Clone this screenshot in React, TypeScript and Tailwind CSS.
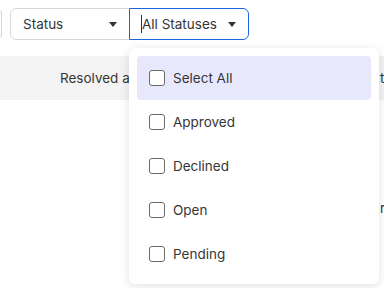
import React from "react";

const options = ["Select All", "Approved", "Declined", "Open", "Pending"];

const Caret = () => (
  <svg width="8" height="5" viewBox="0 0 8 5" className="shrink-0">
    <path d="M0 0 L8 0 L4 5 Z" fill="#333333" />
  </svg>
);

const App = () => {
  return (
    <div
      className="relative h-[288px] w-[384px] overflow-hidden bg-white text-[13.5px] text-[#363636]"
      style={{ fontFamily: "Inter, 'Liberation Sans', sans-serif" }}
    >
      <div className="flex items-center gap-2 pt-2">
        <div className="-ml-6 h-8 w-[26px] rounded-md border border-[#d9d9d9]" />
        <div className="flex h-8 w-[120px] items-center justify-between rounded-l-md border border-[#d9d9d9] pl-3 pr-[12px]">
          <span>Status</span>
          <Caret />
        </div>
        <div className="-ml-[9px] flex h-8 w-[120px] items-center justify-between rounded-r-md border border-[#1a66e0] pl-[11px] pr-[12px]">
          <span className="flex items-center">
            <span className="h-[18px] w-px bg-[#333333]" />
            All Statuses
          </span>
          <Caret />
        </div>
      </div>

      <div className="mt-4 flex h-[44px] items-center bg-[#f3f3f3]">
        <span className="ml-[60px]">Resolved at</span>
        <span className="ml-auto -mr-2 w-[12px]">t</span>
      </div>
      <div className="mt-[98px] flex justify-end">
        <span className="-mr-2 w-[12px]">r</span>
      </div>

      <div className="absolute left-[129px] top-[48px] flex w-[250px] flex-col rounded-md bg-white px-2 py-2 shadow-[0_2px_10px_rgba(0,0,0,0.12)]">
        {options.map((o, i) => (
          <div
            key={o}
            className={
              "flex h-[44px] items-center gap-2 rounded px-3 " +
              (i === 0 ? "bg-[#e8e8fd]" : "")
            }
          >
            <span className="h-4 w-4 rounded-[3px] border border-[#6b6b6b] bg-white" />
            <span>{o}</span>
          </div>
        ))}
      </div>
    </div>
  );
};

export default App;
